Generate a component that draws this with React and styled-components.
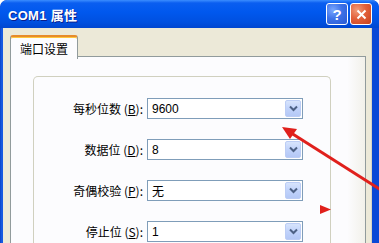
import React from 'react'
import styled, { createGlobalStyle } from 'styled-components'

const Global = createGlobalStyle`
  html, body {
    margin: 0;
    padding: 0;
    background: #ffffff;
    overflow: hidden;
  }
`

const Window = styled.div`
  position: relative;
  width: 379px;
  height: 243px;
  display: flex;
  flex-direction: column;
  overflow: hidden;
  background: linear-gradient(90deg, #0842c8 0, #1a5fe6 2px, #0a48d6 4px);
  border-radius: 7px 7px 0 0;
  font-family: "Noto Sans CJK SC", "Liberation Sans", sans-serif;
`

const TitleBar = styled.div`
  height: 28px;
  flex: none;
  display: flex;
  align-items: center;
  padding: 0 7px 0 8px;
  background: linear-gradient(180deg, #3b8dff 0, #0a5ef0 3px, #0058ee 12px, #0050e0 22px, #0046d0 28px);
  border-radius: 7px 7px 0 0;
`

const Title = styled.span`
  flex: 1;
  color: #ffffff;
  font-family: "Liberation Sans", "Noto Sans CJK SC", sans-serif;
  font-weight: bold;
  font-size: 13px;
  letter-spacing: 0.3px;
  text-shadow: 1px 1px 0 #0a1e8c;
`

const CapButton = styled.div`
  width: 20px;
  height: 20px;
  margin-left: ${({ $first }) => ($first ? '0' : '2px')};
  border: 1px solid #ffffff;
  border-radius: 3px;
  display: flex;
  align-items: center;
  justify-content: center;
  color: #ffffff;
  font-family: "Liberation Sans", sans-serif;
  font-weight: bold;
  font-size: 15px;
  background: ${({ $close }) =>
    $close
      ? 'radial-gradient(circle at 30% 30%, #f19b78 0, #e2603a 45%, #c8401c 100%)'
      : 'radial-gradient(circle at 30% 30%, #7aa8ff 0, #3d72e8 45%, #2a5ad2 100%)'};
`

const Client = styled.div`
  flex: 1;
  display: flex;
  flex-direction: column;
  margin: 0 7px 0 3px;
  padding: 7px 5px 0 7px;
  background: #ece9d8;
  border-right: 1px solid #d8d4c4;
`

const TabStrip = styled.div`
  display: flex;
  height: 22px;
  position: relative;
  z-index: 1;
`

const Tab = styled.div`
  width: 66px;
  height: 22px;
  border: 1px solid #919b9c;
  border-bottom: none;
  border-top: 2px solid #e68b2c;
  border-radius: 3px 3px 0 0;
  background: #fcfcfe;
  box-shadow: inset 0 1px 0 #ffc73c;
  display: flex;
  align-items: center;
  justify-content: center;
  font-size: 12px;
  color: #000000;
`

const Panel = styled.div`
  flex: 1;
  margin-top: -1px;
  border: 1px solid #919b9c;
  border-bottom: none;
  background: linear-gradient(90deg, #fcfcfe 0, #fcfcfe 95%, #f2f1ea 100%);
  padding: 19px 34px 0 22px;
`

const GroupBox = styled.div`
  border: 1px solid #d0d0bf;
  border-bottom: none;
  border-radius: 5px 5px 0 0;
  height: 200px;
  padding-top: 21px;
  display: grid;
  grid-template-columns: 109px 156px;
  grid-auto-rows: 21px;
  column-gap: 4px;
  row-gap: 20px;
  align-content: start;
`

const Label = styled.div`
  justify-self: end;
  align-self: center;
  font-size: 12px;
  color: #000000;
  white-space: nowrap;
  u {
    text-decoration: underline;
  }
`

const Combo = styled.div`
  display: flex;
  align-items: center;
  border: 1px solid #7f9db9;
  background: #ffffff;
  padding: 1px;
  box-sizing: border-box;
  height: 21px;
`

const ComboText = styled.span`
  flex: 1;
  padding-left: 3px;
  font-size: 12px;
  color: #000000;
  font-family: "Liberation Sans", "Noto Sans CJK SC", sans-serif;
`

const DropButton = styled.div`
  width: 16px;
  height: 17px;
  border-radius: 2px;
  background: linear-gradient(180deg, #d7e4fc 0, #c1d3fb 50%, #b4c8f6 100%);
  border: 1px solid #bccdf5;
  box-sizing: border-box;
  display: flex;
  align-items: center;
  justify-content: center;
`

const Overlay = styled.svg`
  position: absolute;
  left: 0;
  top: 0;
  pointer-events: none;
`

const Chevron = () => (
  <svg width="9" height="7" viewBox="0 0 9 7">
    <path d="M1 1.5 L4.5 5 L8 1.5" fill="none" stroke="#4d6185" strokeWidth="2" />
  </svg>
)

const rows = [
  { label: '每秒位数', key: 'B', value: '9600' },
  { label: '数据位', key: 'D', value: '8' },
  { label: '奇偶校验', key: 'P', value: '无' },
  { label: '停止位', key: 'S', value: '1' },
]

export default function App() {
  return (
    <>
      <Global />
      <Window>
        <TitleBar>
          <Title>COM1 属性</Title>
          <CapButton $first>?</CapButton>
          <CapButton $close>
            <svg width="11" height="11" viewBox="0 0 11 11">
              <path d="M1.5 1.5 L9.5 9.5 M9.5 1.5 L1.5 9.5" stroke="#ffffff" strokeWidth="2" />
            </svg>
          </CapButton>
        </TitleBar>
        <Client>
          <TabStrip>
            <Tab>端口设置</Tab>
          </TabStrip>
          <Panel>
            <GroupBox>
              {rows.map((r) => (
                <React.Fragment key={r.key}>
                  <Label>
                    {r.label} (<u>{r.key}</u>):
                  </Label>
                  <Combo>
                    <ComboText>{r.value}</ComboText>
                    <DropButton>
                      <Chevron />
                    </DropButton>
                  </Combo>
                </React.Fragment>
              ))}
            </GroupBox>
          </Panel>
        </Client>
        <Overlay width="379" height="243" viewBox="0 0 379 243">
          <line x1="381" y1="190" x2="288" y2="131" stroke="#e0201c" strokeWidth="3" />
          <path d="M282 127 L297 129 L290 139 Z" fill="#e0201c" />
          <path d="M320 205 L331 209.5 L320 214 Z" fill="#e0201c" />
        </Overlay>
      </Window>
    </>
  )
}
